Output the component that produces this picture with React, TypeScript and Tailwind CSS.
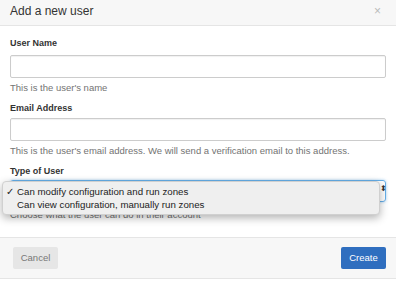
export default function App() {
  return (
    <div className="relative h-[281px] w-[396px] overflow-hidden bg-white font-['Liberation_Sans',Arial,sans-serif] text-[#333]">
      <div className="flex h-[26px] items-center justify-between border-b border-[#e5e5e5] bg-[#f7f7f7] pl-[10px] pr-[15px] pb-[3px]">
        <h4 className="text-[12px] leading-none">Add a new user</h4>
        <span className="text-[12px] leading-none text-[#bbb]">×</span>
      </div>

      <div className="flex flex-col px-[10px] pt-[11px]">
        <label className="text-[9px] font-bold leading-[12px]">User Name</label>
        <input className="mt-[6px] h-[23px] w-full rounded-[2px] border border-[#ccc] bg-white px-2 text-[9px] shadow-[inset_0_1px_1px_rgba(0,0,0,0.06)] outline-none" />
        <p className="mt-[4px] text-[9.5px] leading-[11px] text-[#737373]">This is the user's name</p>

        <label className="mt-[9px] text-[9px] font-bold leading-[12px]">Email Address</label>
        <input className="mt-[4px] h-[23px] w-full rounded-[2px] border border-[#ccc] bg-white px-2 text-[9px] shadow-[inset_0_1px_1px_rgba(0,0,0,0.06)] outline-none" />
        <p className="mt-[4px] text-[9.5px] leading-[11px] text-[#737373]">
          This is the user's email address. We will send a verification email to this address.
        </p>

        <label className="mt-[9px] text-[9px] font-bold leading-[12px]">Type of User</label>
        <div className="mt-[3px] h-[22px] w-full rounded-[3px] border border-[#66afe9] shadow-[0_0_3px_rgba(102,175,233,0.6)]" />
        <p className="mt-[7px] text-[9.5px] leading-[11px] text-[#737373]">Choose what the user can do in their account</p>
      </div>

      <div className="absolute left-[2px] top-[181px] w-[378px] rounded-[4px] border border-[#d0d0d0] bg-[#efefef] pt-[3px] pb-[3px] text-[9.7px] leading-[13px] text-[#222] shadow-[0_3px_8px_rgba(0,0,0,0.3)]">
        <div className="flex">
          <span className="w-[14px] pl-[3px]">✓</span>
          <span>Can modify configuration and run zones</span>
        </div>
        <div className="flex">
          <span className="w-[14px]" />
          <span>Can view configuration, manually run zones</span>
        </div>
      </div>
      <span className="absolute left-[380px] top-[185px] text-[8px] leading-none text-[#333]">⬍</span>

      <div className="absolute inset-x-0 top-[237px] flex h-[42px] items-center justify-between border-y border-[#e5e5e5] bg-[#f7f7f7] pl-[13px] pr-[10px]">
        <button className="h-[22px] w-[45px] rounded-[2px] bg-[#e6e6e6] text-[9.5px] text-[#777]">Cancel</button>
        <button className="h-[22px] w-[45px] rounded-[2px] bg-[#2f6ebf] text-[9.5px] text-white">Create</button>
      </div>
    </div>
  );
}
